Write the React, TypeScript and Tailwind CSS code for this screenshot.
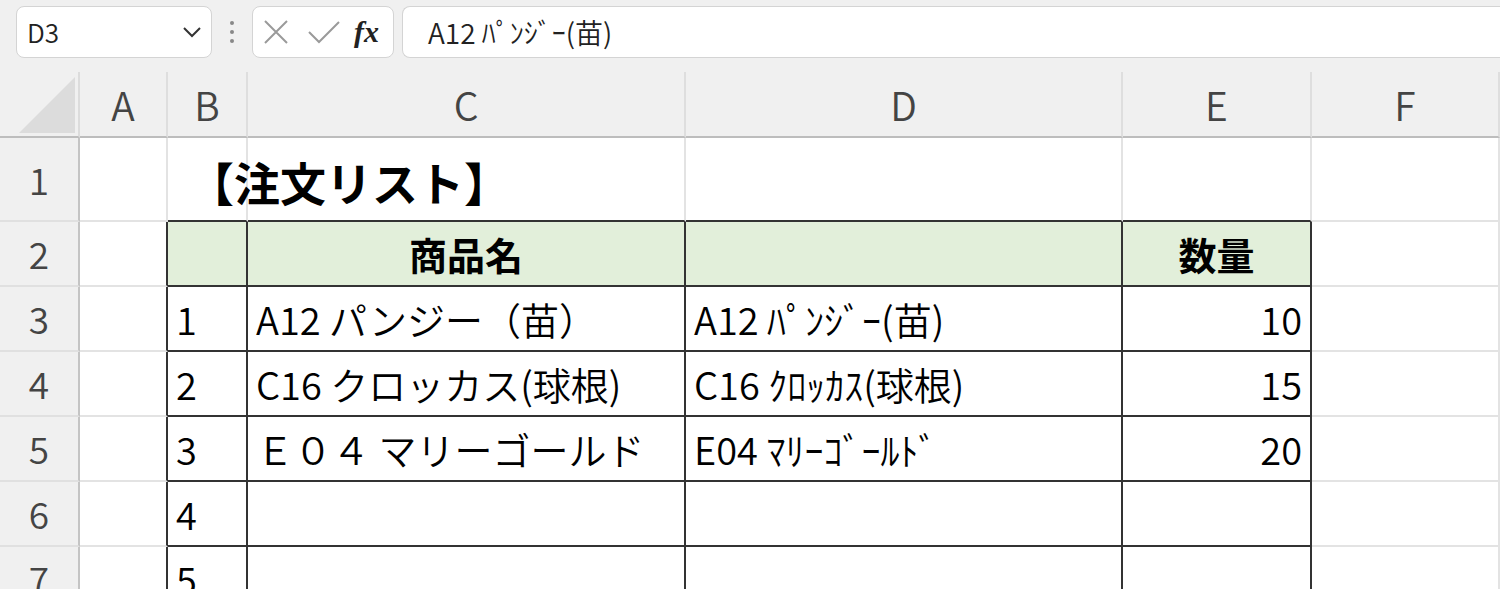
import React from "react";

const font = "font-['Noto_Sans_CJK_JP','Noto_Sans',sans-serif]";

const cols = ["A", "B", "C", "D", "E", "F"];

const rowHeights = ["h-[84px]", "h-[65px]", "h-[65px]", "h-[65px]", "h-[65px]", "h-[65px]", "h-[65px]"];

type CellDef = {
    text?: string;
    align?: "left" | "center" | "right";
    bold?: boolean;
    big?: boolean;
    fill?: boolean;
    darkRight?: boolean;
    darkBottom?: boolean;
};

// rows 1..7, columns A..F
const sheet: CellDef[][] = [
    [
        {},
        { text: "【注文リスト】", big: true, bold: true, darkBottom: true },
        { darkBottom: true },
        { darkBottom: true },
        { darkBottom: true },
        {},
    ],
    [
        { darkRight: true },
        { fill: true, darkRight: true, darkBottom: true },
        { text: "商品名", bold: true, align: "center", fill: true, darkRight: true, darkBottom: true },
        { fill: true, darkRight: true, darkBottom: true },
        { text: "数量", bold: true, align: "center", fill: true, darkRight: true, darkBottom: true },
        {},
    ],
    [
        { darkRight: true },
        { text: "1", darkRight: true, darkBottom: true },
        { text: "A12 パンジー（苗）", darkRight: true, darkBottom: true },
        { text: "A12 ﾊﾟﾝｼﾞｰ(苗)", darkRight: true, darkBottom: true },
        { text: "10", align: "right", darkRight: true, darkBottom: true },
        {},
    ],
    [
        { darkRight: true },
        { text: "2", darkRight: true, darkBottom: true },
        { text: "C16 クロッカス(球根)", darkRight: true, darkBottom: true },
        { text: "C16 ｸﾛｯｶｽ(球根)", darkRight: true, darkBottom: true },
        { text: "15", align: "right", darkRight: true, darkBottom: true },
        {},
    ],
    [
        { darkRight: true },
        { text: "3", darkRight: true, darkBottom: true },
        { text: "Ｅ０４ マリーゴールド", darkRight: true, darkBottom: true },
        { text: "E04 ﾏﾘｰｺﾞｰﾙﾄﾞ", darkRight: true, darkBottom: true },
        { text: "20", align: "right", darkRight: true, darkBottom: true },
        {},
    ],
    [
        { darkRight: true },
        { text: "4", darkRight: true, darkBottom: true },
        { darkRight: true, darkBottom: true },
        { darkRight: true, darkBottom: true },
        { darkRight: true, darkBottom: true },
        {},
    ],
    [
        { darkRight: true },
        { text: "5", darkRight: true, darkBottom: true },
        { darkRight: true, darkBottom: true },
        { darkRight: true, darkBottom: true },
        { darkRight: true, darkBottom: true },
        {},
    ],
];

const Cell = ({ cell, height }: { cell: CellDef; height: string }) => {
    const justify = cell.align === "center" ? "justify-center" : cell.align === "right" ? "justify-end pr-[8px]" : "justify-start pl-[8px]";
    return (
        <div
            className={[
                "flex items-center overflow-visible whitespace-nowrap border-r-2 border-b-2 text-black",
                height,
                justify,
                cell.fill ? "bg-[#e2efda]" : "bg-white",
                cell.darkRight ? "border-r-[#333]" : "border-r-[#e3e3e3]",
                cell.darkBottom ? "border-b-[#333]" : "border-b-[#e3e3e3]",
                cell.big ? "relative z-10 text-[46px] pt-[4px] pl-[20px]" : "text-[38px]",
                cell.bold ? "font-bold" : "font-[350]",
            ].join(" ")}
        >
            {cell.text && <span className="leading-none">{cell.text}</span>}
        </div>
    );
};

const TopBar = () => {
    return (
        <div className="flex h-[72px] items-start pt-[6px] bg-[#f0f0f0]">
            <div className="ml-[16px] flex h-[52px] w-[196px] items-center justify-between rounded-[8px] border border-[#d4d4d4] bg-white pl-[10px] pr-[9px]">
                <span className="text-[26px] font-[350] leading-none text-[#222]">D3</span>
                <svg width="20" height="12" viewBox="0 0 20 12" fill="none">
                    <path d="M2 2l8 8 8-8" stroke="#333" strokeWidth="2" />
                </svg>
            </div>
            <div className="flex h-[52px] w-[40px] flex-col items-center justify-center gap-[5px]">
                <div className="h-[4px] w-[4px] rounded-full bg-[#888]"></div>
                <div className="h-[4px] w-[4px] rounded-full bg-[#888]"></div>
                <div className="h-[4px] w-[4px] rounded-full bg-[#888]"></div>
            </div>
            <div className="flex h-[52px] w-[142px] items-center rounded-[8px] border border-[#d4d4d4] bg-white pl-[11px]">
                <svg width="24" height="24" viewBox="0 0 24 24" fill="none">
                    <path d="M1 1l22 22M23 1L1 23" stroke="#9a9a9a" strokeWidth="2" />
                </svg>
                <svg className="ml-[20px]" width="32" height="24" viewBox="0 0 32 24" fill="none">
                    <path d="M1 12l10 10L31 2" stroke="#9a9a9a" strokeWidth="2" />
                </svg>
                <span className="ml-[14px] font-['Liberation_Serif',serif] text-[30px] font-bold italic leading-none text-[#222]">fx</span>
            </div>
            <div className="ml-[8px] flex h-[52px] flex-1 items-center rounded-l-[8px] border border-r-0 border-[#d4d4d4] bg-white pl-[25px]">
                <span className="text-[28px] font-[350] leading-none text-[#222]">A12 ﾊﾟﾝｼﾞｰ(苗)</span>
            </div>
        </div>
    );
};

export default function App() {
    return (
        <div className={`${font} h-[589px] w-[1500px] overflow-hidden bg-[#f0f0f0]`}>
            <TopBar />
            <div className="grid grid-cols-[80px_88px_80px_438px_437px_189px_1fr]">
                <div className="flex h-[66px] items-end justify-end border-r-2 border-b-2 border-r-[#dcdcdc] border-b-[#bdbdbd] bg-[#f0f0f0] pr-[3px] pb-[3px]">
                    <svg width="56" height="56" viewBox="0 0 56 56">
                        <path d="M56 0V56H0Z" fill="#dcdcdc" />
                    </svg>
                </div>
                {cols.map((c) => (
                    <div
                        key={c}
                        className="flex h-[66px] items-center justify-center border-r-2 border-b-2 border-r-[#dedede] border-b-[#bdbdbd] bg-[#f0f0f0] text-[39px] font-[350] leading-none text-[#444]"
                    >
                        {c}
                    </div>
                ))}
                {sheet.map((row, ri) => (
                    <React.Fragment key={ri}>
                        <div
                            className={`flex ${rowHeights[ri]} items-center justify-center border-r-2 border-b-2 border-r-[#c4c4c4] border-b-[#e0e0e0] bg-[#f0f0f0] text-[37px] font-[350] leading-none text-[#444]`}
                        >
                            {ri + 1}
                        </div>
                        {row.map((cell, ci) => (
                            <Cell key={ci} cell={cell} height={rowHeights[ri]} />
                        ))}
                    </React.Fragment>
                ))}
            </div>
        </div>
    );
}
